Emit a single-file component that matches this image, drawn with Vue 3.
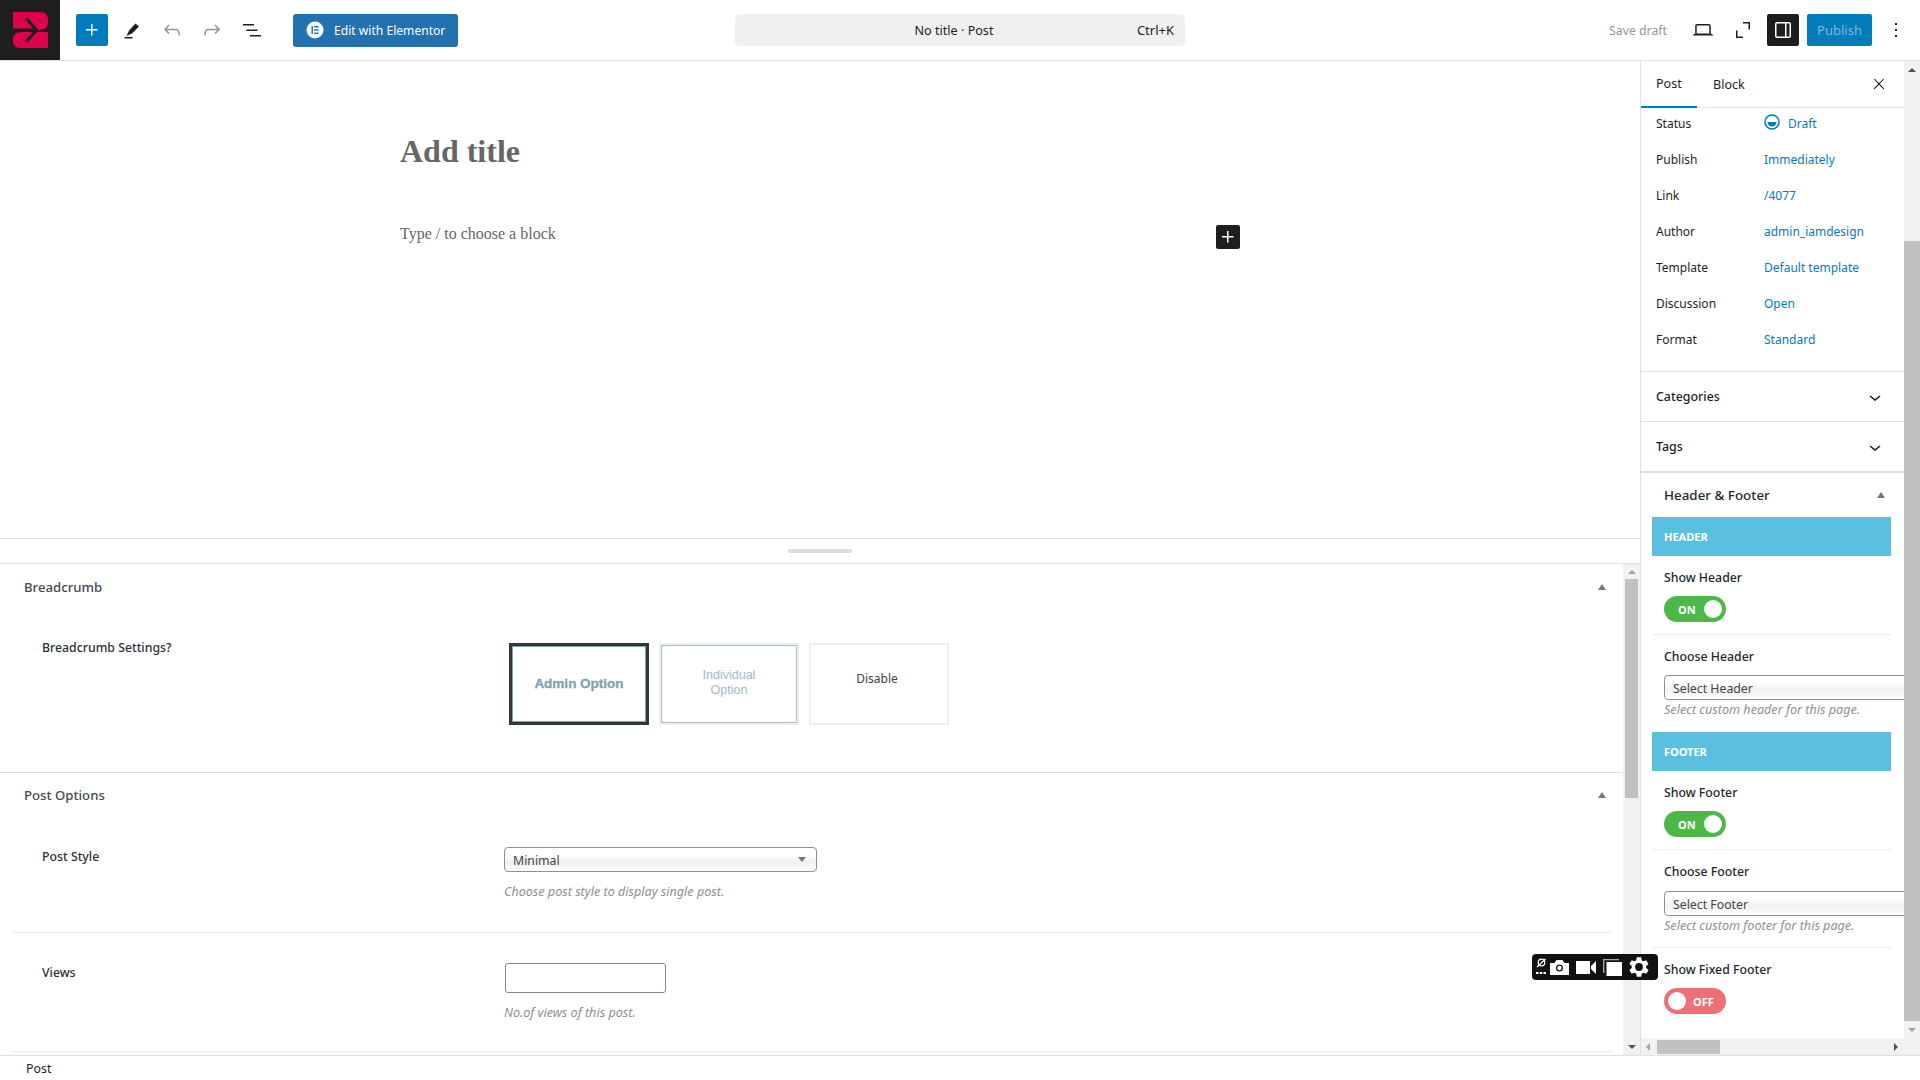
<script setup>
const metaRows = [
  ['Status', 'Draft'],
  ['Publish', 'Immediately'],
  ['Link', '/4077'],
  ['Author', 'admin_iamdesign'],
  ['Template', 'Default template'],
  ['Discussion', 'Open'],
  ['Format', 'Standard']
]
const options = [
  { label: 'Admin Option', cls: 'opt-admin' },
  { label: 'Individual Option', cls: 'opt-ind' },
  { label: 'Disable', cls: 'opt-dis' }
]
</script>

<template>
  <div class="app">
    <header class="topbar">
      <div class="logo">
        <svg width="60" height="60" viewBox="0 0 60 60">
          <path fill="#e0004d" d="M13 12H40Q48 12 48 20V22Q48 30 40 30H13Z"/>
          <path fill="#e0004d" d="M22 32H48V48H20Q13 48 13 41V39Q13 32 22 32Z"/>
          <path fill="#1e1e1e" d="M13 28.500H36V31.500H13Z"/>
          <path fill="none" stroke="#1e1e1e" stroke-width="3" d="M26 18L36.500 30L26 42"/>
        </svg>
      </div>
      <div class="tools">
        <button class="btn-plus"><svg width="24" height="24" viewBox="0 0 24 24"><path fill="#fff" d="M11 12.500V17.500H12.500V12.500H17.500V11H12.500V6H11V11H6V12.500H11Z"/></svg></button>
        <span class="ico"><svg width="24" height="24" viewBox="0 0 24 24"><path fill="#1e1e1e" d="M4.500 20.500h8V19h-8zM9 12.500l6.500-7 3.500 3-7 7-3.500 1.500-2 1.500 1-2.500z"/></svg></span>
        <span class="ico"><svg width="24" height="24" viewBox="0 0 24 24"><path fill="#949494" d="M18.300 11.700c-.6-.6-1.400-.9-2.300-.9H6.700l2.900-3.300-1.100-1-4.500 5L8.500 16l1-1-2.700-2.700H16c.5 0 .9.2 1.300.5 1 1 1 3.400 1 4.500v.3h1.500v-.2c0-1.500 0-4.300-1.500-5.700z"/></svg></span>
        <span class="ico"><svg width="24" height="24" viewBox="0 0 24 24"><path fill="#949494" d="M15.600 6.500l-1.100 1 2.900 3.300H8c-.9 0-1.700.3-2.300.9-1.400 1.500-1.400 4.200-1.400 5.600v.2h1.500v-.3c0-1.100 0-3.500 1-4.500.3-.3.700-.5 1.300-.5h9.200L14.500 15l1.100 1.100 4.600-4.600-4.600-5z"/></svg></span>
        <span class="ico"><svg width="24" height="24" viewBox="0 0 24 24"><path fill="#1e1e1e" d="M3 6h11v1.500H3V6zm3.500 5.500h11V13h-11v-1.500zM21 17H10v1.500h11V17z"/></svg></span>
      </div>
      <button class="btn-elementor">
        <span class="e-badge"><svg width="18" height="18" viewBox="0 0 18 18"><circle cx="9" cy="9" r="8.500" fill="#fff"/><path fill="#2271b1" d="M5.500 5h1.400v8H5.500zM8.200 5h4.300v1.500H8.200zM8.200 8.200h4.300v1.500H8.200zM8.200 11.500h4.300V13H8.200z"/></svg></span>
        Edit with Elementor
      </button>
      <div class="command">
        <span class="cmd-title">No title · Post</span>
        <span class="cmd-key">Ctrl+K</span>
      </div>
      <div class="top-right">
        <span class="save">Save draft</span>
        <span class="ico"><svg width="24" height="24" viewBox="0 0 24 24"><path fill="#1e1e1e" d="M20.500 16h-.7V8c0-1.100-.9-2-2-2H6.200c-1.100 0-2 .9-2 2v8h-.7c-.8 0-1.500.7-1.500 1.500h20c0-.8-.7-1.500-1.500-1.500zM5.700 8c0-.3.2-.5.5-.5h11.600c.3 0 .5.200.5.5v7.600H5.700V8z"/></svg></span>
        <span class="ico"><svg width="24" height="24" viewBox="0 0 24 24"><path fill="#1e1e1e" d="M5 12.500h1.500v6H12V20H5zM19 11.500h-1.500v-6H12V4h7z"/></svg></span>
        <span class="ico ico-dark"><svg width="24" height="24" viewBox="0 0 24 24"><path fill="#fff" d="M18 4H6c-1.100 0-2 .9-2 2v12c0 1.100.9 2 2 2h12c1.100 0 2-.9 2-2V6c0-1.100-.9-2-2-2zm-4 14.500H6c-.3 0-.5-.2-.5-.5V6c0-.3.2-.5.5-.5h8v13zm4.500-.5c0 .3-.2.5-.5.5h-2.500v-13H18c.3 0 .5.200.5.5v12z"/></svg></span>
        <button class="btn-publish">Publish</button>
        <span class="ico ico-more"><svg width="24" height="24" viewBox="0 0 24 24"><path fill="#1e1e1e" d="M13 19h-2v-2h2v2zm0-6h-2v-2h2v2zm0-6h-2V5h2v2z"/></svg></span>
      </div>
    </header>

    <div class="body">
      <main class="main">
        <section class="editor">
          <div class="canvas">
            <h1 class="title">Add title</h1>
            <div class="para-row">
              <p class="para">Type / to choose a block</p>
              <button class="mini-plus"><svg width="24" height="24" viewBox="0 0 24 24"><path fill="#fff" d="M11 12.500V17.500H12.500V12.500H17.500V11H12.500V6H11V11H6V12.500H11Z"/></svg></button>
            </div>
          </div>
        </section>
        <div class="resize"><span class="grip"></span></div>
        <section class="metabox">
          <div class="meta-scroll">
            <div class="mb-head"><span>Breadcrumb</span><i class="tri"></i></div>
            <div class="mb-row crumb-row">
              <label class="mb-label">Breadcrumb Settings?</label>
              <div class="opts">
                <div v-for="o in options" :key="o.label" class="opt" :class="o.cls"><span>{{ o.label }}</span></div>
              </div>
            </div>
            <div class="mb-head second"><span>Post Options</span><i class="tri"></i></div>
            <div class="mb-row style-row">
              <label class="mb-label">Post Style</label>
              <div class="field">
                <div class="fake-select wide">Minimal<i class="sel-tri"></i></div>
                <p class="hint">Choose post style to display single post.</p>
              </div>
            </div>
            <div class="mb-row views-row">
              <label class="mb-label">Views</label>
              <div class="field">
                <div class="fake-input"></div>
                <p class="hint">No.of views of this post.</p>
              </div>
            </div>
          </div>
          <div class="scrollbar">
            <i class="arr up"></i>
            <div class="thumb-track"><div class="thumb"></div></div>
            <i class="arr down"></i>
          </div>
        </section>
      </main>

      <aside class="sidebar">
        <div class="side-col">
          <div class="tabs">
            <span class="tab active">Post</span>
            <span class="tab">Block</span>
            <svg class="close" width="24" height="24" viewBox="0 0 24 24"><path fill="#1e1e1e" d="M13 11.800l6.100-6.300-1-1-6.100 6.200-6.100-6.200-1 1 6.100 6.300-6.500 6.700 1 1 6.500-6.600 6.500 6.600 1-1z" transform="translate(3.600 3.600) scale(.7)"/></svg>
          </div>
          <div class="side-scroll">
            <div class="meta-list">
              <div v-for="(r, i) in metaRows" :key="r[0]" class="meta-row">
                <span class="m-key">{{ r[0] }}</span>
                <span class="m-val">
                  <svg v-if="i === 0" class="draft-ico" width="16" height="16" viewBox="0 0 16 16"><circle cx="8" cy="8" r="7" fill="none" stroke="#007cba" stroke-width="1.500"/><path fill="#007cba" d="M3.500 8h9a4.500 4.500 0 0 1-9 0z"/></svg>{{ r[1] }}
                </span>
              </div>
            </div>
            <div class="panel">Categories<svg width="24" height="24" viewBox="0 0 24 24"><path fill="#1e1e1e" d="M17.500 11.600L12 16l-5.500-4.400.9-1.200L12 14l4.500-3.600 1 1.200z"/></svg></div>
            <div class="panel thick">Tags<svg width="24" height="24" viewBox="0 0 24 24"><path fill="#1e1e1e" d="M17.500 11.600L12 16l-5.500-4.400.9-1.200L12 14l4.500-3.600 1 1.200z"/></svg></div>
            <div class="hf">
              <div class="hf-head"><span>Header &amp; Footer</span><i class="tri"></i></div>
              <div class="band">HEADER</div>
              <div class="hf-field first">
                <div class="hf-label">Show Header</div>
                <div class="toggle on"><b>ON</b><i></i></div>
              </div>
              <div class="hf-field sel">
                <div class="hf-label">Choose Header</div>
                <div class="fake-select side">Select Header</div>
                <p class="hint side-hint">Select custom header for this page.</p>
              </div>
              <div class="band">FOOTER</div>
              <div class="hf-field first">
                <div class="hf-label">Show Footer</div>
                <div class="toggle on"><b>ON</b><i></i></div>
              </div>
              <div class="hf-field sel sep">
                <div class="hf-label">Choose Footer</div>
                <div class="fake-select side">Select Footer</div>
                <p class="hint side-hint">Select custom footer for this page.</p>
              </div>
              <div class="hf-field last">
                <div class="hf-label">Show Fixed Footer</div>
                <div class="toggle off"><i></i><b>OFF</b></div>
              </div>
            </div>
          </div>
          <div class="hbar">
            <i class="arr left"></i>
            <div class="hthumb"></div>
            <i class="arr right"></i>
          </div>
        </div>
        <div class="vbar">
          <i class="arr up dark"></i>
          <div class="vtrack"><div class="vthumb"></div></div>
          <i class="arr down light"></i>
          <div class="corner"></div>
        </div>
      </aside>

      <div class="float-bar">
        <svg width="10" height="20" viewBox="0 0 10 20"><circle cx="5.500" cy="5.500" r="3.300" fill="none" stroke="#fff" stroke-width="1.200"/><path stroke="#fff" stroke-width="1.200" d="M1 10 L9.500 2"/><path fill="#fff" d="M0 15h2.500v2H0zM3.700 15h2.500v2H3.700zM7.400 15h2.500v2H7.400z"/></svg>
        <svg class="cam" width="19" height="15" viewBox="0 0 19 15"><path fill="#fff" fill-rule="evenodd" d="M0 3h4.500l2-3h6l2 3H19v12H0zM9.500 4.500a3.500 3.500 0 1 0 0 7 3.500 3.500 0 0 0 0-7zm0 1.300a2.200 2.200 0 1 1 0 4.400 2.200 2.200 0 0 1 0-4.400z"/></svg>
        <svg width="20" height="13" viewBox="0 0 20 13"><path fill="#fff" d="M0 0h14v13H0zM15 5L20 0v13L15 8z"/></svg>
        <svg width="19" height="17" viewBox="0 0 19 17"><path fill="none" stroke="#aaa" stroke-width="1.300" d="M.7 14V.7H16"/><path fill="#fff" d="M3.500 3H19V17H3.500z"/></svg>
        <svg width="20" height="20" viewBox="3 3 18 18"><path fill="#fff" d="M19.400 13a7.500 7.500 0 0 0 0-2l2.100-1.600-2-3.500-2.500 1a7.500 7.500 0 0 0-1.700-1L15 3.200h-4l-.4 2.700a7.500 7.500 0 0 0-1.700 1l-2.500-1-2 3.500L6.500 11a7.500 7.500 0 0 0 0 2l-2.100 1.600 2 3.500 2.500-1a7.500 7.500 0 0 0 1.700 1l.4 2.700h4l.4-2.700a7.500 7.500 0 0 0 1.700-1l2.500 1 2-3.500zM13 15.500a3.500 3.500 0 1 1 0-7 3.500 3.500 0 0 1 0 7z" transform="translate(-1 0)"/></svg>
      </div>
    </div>

    <footer class="foot">Post</footer>
  </div>
</template>

<style>
html, body { margin: 0; background: #fff; }
</style>

<style scoped>
.app {
  width: 1920px; height: 1080px; display: flex; flex-direction: column; overflow: hidden;
  font-family: "Noto Sans", "Open Sans", sans-serif; font-size: 12.4px; color: #1e1e1e; background: #fff;
}
button { border: 0; padding: 0; font: inherit; }
i { display: block; }
svg { display: block; flex: none; }

.topbar { height: 60px; flex: none; display: flex; align-items: center; border-bottom: 1px solid #e0e0e0; }
.logo { width: 60px; height: 60px; background: #1e1e1e; flex: none; }
.tools { display: flex; align-items: center; margin-left: 16px; }
.btn-plus { width: 32px; height: 32px; background: #007cba; border-radius: 2px; display: flex; align-items: center; justify-content: center; margin-right: 8px; }
.ico { width: 32px; height: 32px; display: flex; align-items: center; justify-content: center; margin-right: 8px; flex: none; }
.tools .ico:last-child { margin-right: 0; }
.btn-elementor { margin-left: 25px; width: 165px; height: 33px; background: #2271b1; color: #fff; border-radius: 3px; display: flex; align-items: center; padding-left: 13px; gap: 10px; font-size: 12.1px; box-sizing: border-box; white-space: nowrap; }
.command { margin-left: 277px; width: 450px; height: 32px; background: #f0f0f0; border-radius: 4px; position: relative; display: flex; align-items: center; justify-content: center; }
.cmd-title { font-size: 12.6px; margin-right: 12px; }
.cmd-key { position: absolute; right: 11px; font-size: 13px; }
.top-right { margin-left: auto; display: flex; align-items: center; }
.save { color: #949494; font-size: 12.3px; margin-right: 20px; }
.top-right .ico { margin-right: 8px; }
.ico-dark { background: #1e1e1e; border-radius: 2px; }
.btn-publish { width: 65px; height: 32px; background: #007cba; color: #7fb8d8; border-radius: 2px; font-size: 13px; }
.ico-more { margin: 0 8px 0 8px !important; }

.body { flex: 1; min-height: 0; display: flex; position: relative; }
.main { flex: 1; min-width: 0; display: flex; flex-direction: column; }
.editor { height: 477px; flex: none; border-bottom: 1px solid #e0e0e0; }
.canvas { width: 840px; margin-left: 400px; padding-top: 68px; }
.title { margin: 0; font: bold 32px/44px "Liberation Serif", serif; color: #666; }
.para-row { display: flex; align-items: center; justify-content: space-between; margin-top: 46px; width: 840px; }
.para { margin: 0; font: 16px/24px "Liberation Serif", serif; color: #666; }
.mini-plus { width: 24px; height: 24px; background: #1e1e1e; border-radius: 2px; margin-top: 6px; }
.resize { height: 24px; flex: none; border-bottom: 1px solid #e0e0e0; display: flex; align-items: center; justify-content: center; }
.grip { width: 64px; height: 4px; background: #ddd; border-radius: 2px; }
.metabox { flex: 1; min-height: 0; display: flex; }
.meta-scroll { flex: 1; min-width: 0; overflow: hidden; }
.mb-head { height: 45px; display: flex; align-items: center; justify-content: space-between; padding: 0 17px 0 24px; font-size: 13.2px; font-weight: 500; color: #444b52; box-sizing: border-box; }
.mb-head.second { height: 44px; border-top: 1px solid #ddd; }
.tri { width: 0; height: 0; border: 4px solid transparent; border-top: 0; border-bottom: 6px solid #777; }
.mb-row { display: flex; align-items: flex-start; margin: 0 12px; }
.mb-label { width: 492px; padding-left: 30px; box-sizing: border-box; font-size: 12.3px; font-weight: 500; line-height: 19px; flex: none; color: #2b3036; }
.crumb-row { height: 163px; padding-top: 29px; box-sizing: border-box; }
.opts { display: flex; gap: 10px; margin-left: 5px; margin-top: 5px; }
.opt { width: 140px; height: 82px; box-sizing: border-box; display: flex; align-items: center; justify-content: center; text-align: center; }
.opt-admin { border: 3px solid #32373c; box-shadow: inset 0 0 0 1px #7ea2b0; color: #7ea2b0; font: bold 13.5px "Liberation Sans", sans-serif; -webkit-text-stroke: .3px #7ea2b0; padding-bottom: 2px; }
.opt-ind { border: 2px solid #f0f0f0; box-shadow: inset 0 0 0 1px #a8c0cc; color: #a2bac6; font: 12.5px/15px "Liberation Sans", sans-serif; padding: 0 40px 2px; }
.opt-dis { border: 2px solid #f0f0f0; color: #3c434a; font-size: 12px; padding: 0 4px 12px 0; }
.style-row { height: 117px; padding-top: 31px; box-sizing: border-box; border-bottom: 1px solid #eaeaea; }
.field { display: flex; flex-direction: column; }
.fake-select { background: linear-gradient(#fff 30%, #f0f0f0 60%, #fff); border: 1px solid #8c8f94; border-radius: 4px; height: 25px; box-sizing: border-box; font-size: 12.3px; line-height: 25px; padding-left: 8px; color: #444; position: relative; }
.wide { width: 313px; }
.sel-tri { position: absolute; right: 10px; top: 9px; width: 0; height: 0; border: 4px solid transparent; border-bottom: 0; border-top: 5px solid #777; }
.hint { margin: 0; font-size: 12.6px; font-style: italic; color: #8c8f94; line-height: 18px; }
.style-row .hint { margin-top: 11px; }
.views-row { height: 119px; padding-top: 30px; box-sizing: border-box; border-bottom: 1px solid #eaeaea; }
.fake-input { width: 161px; height: 30px; border: 1px solid #7e8993; border-radius: 3px; box-sizing: border-box; margin-left: 1px; }
.views-row .hint { margin-top: 11px; }
.scrollbar { width: 17px; flex: none; background: #f1f1f1; display: flex; flex-direction: column; align-items: center; }
.thumb-track { flex: 1; width: 100%; }
.thumb { height: 219px; background: #c1c1c1; margin: 0 2px; }
.arr { flex: none; width: 0; height: 0; border: 4px solid transparent; }
.arr.up { border-top: 0; border-bottom: 4px solid #a3a3a3; margin: 6px 0 5px; }
.arr.down { border-bottom: 0; border-top: 4px solid #505050; margin: 6px 0; }
.arr.up.dark { border-bottom-color: #505050; margin: 7px 0; }
.arr.down.light { border-top-color: #a3a3a3; margin: 6px 0; }
.arr.left { border-left: 0; border-right: 4px solid #a3a3a3; margin: 0 7px 0 5px; }
.arr.right { border-right: 0; border-left: 4px solid #505050; margin: 0 6px 0 auto; }

.sidebar { width: 280px; flex: none; display: flex; border-left: 1px solid #e0e0e0; box-sizing: border-box; }
.side-col { width: 263px; flex: none; display: flex; flex-direction: column; overflow: hidden; }
.tabs { height: 47px; flex: none; display: flex; align-items: center; border-bottom: 1px solid #e0e0e0; box-sizing: border-box; }
.tab { height: 47px; box-sizing: border-box; padding: 0 15px; line-height: 46px; width: 56px; font-size: 12.6px; }
.tab + .tab { width: auto; padding-left: 16px; line-height: 48px; }
.tab.active { border-bottom: 2px solid #007cba; }
.close { margin-left: auto; margin-right: 13px; }
.side-scroll { flex: 1; min-height: 0; overflow: hidden; }
.meta-list { display: flow-root; padding: 0 15px; height: 264px; border-bottom: 1px solid #e0e0e0; box-sizing: border-box; }
.meta-row { height: 36px; display: flex; align-items: center; font-size: 12px; }
.meta-row:first-child { margin-top: -3px; }
.m-key { width: 108px; flex: none; }
.m-val { color: #007cba; display: flex; align-items: center; gap: 8px; }
.draft-ico { margin-top: -2px; }
.panel { height: 50px; display: flex; align-items: center; justify-content: space-between; padding: 0 17px 0 15px; border-bottom: 1px solid #e0e0e0; font-weight: 500; font-size: 12.4px; box-sizing: border-box; }
.panel.thick { height: 51px; border-bottom: 2px solid #e0e0e0; }
.hf { padding: 0 11px; }
.hf-head { height: 44px; display: flex; align-items: center; justify-content: space-between; padding: 0 8px 0 12px; font-size: 13.4px; font-weight: 500; color: #23282d; }
.band { height: 39px; width: 239px; background: #5bbfe0; color: #fff; font-size: 11px; font-weight: 700; line-height: 39px; padding-left: 12px; box-sizing: border-box; }
.hf-field { padding-left: 12px; width: 240px; box-sizing: border-box; }
.hf-label { font-size: 12.3px; font-weight: 500; line-height: 19px; color: #23282d; }
.hf-field.first { padding-top: 12px; height: 79px; border-bottom: 1px solid #eee; }
.hf-field.sel { padding-top: 12px; height: 97px; }
.hf-field.sep { height: 98px; border-bottom: 1px solid #eee; }
.hf-field.sep .fake-select { margin-top: 10px; }
.hf-field.last { padding-top: 12px; height: 80px; }
.toggle { width: 62px; height: 26px; border-radius: 13px; margin-top: 9px; display: flex; align-items: center; color: #fff; font-size: 11px; box-sizing: border-box; }
.toggle i { width: 18px; height: 18px; border-radius: 50%; background: #fff; }
.toggle b { font-weight: 700; }
.toggle.on { background: #4db848; padding-left: 14px; }
.toggle.on i { margin-left: auto; margin-right: 4px; }
.toggle.off { background: #ef6f76; padding-left: 4px; }
.toggle.off b { margin-left: 7px; }
.fake-select.side { width: 260px; margin-top: 9px; }
.side-hint { margin-top: 1px; white-space: nowrap; }
.hbar { height: 17px; flex: none; background: #f1f1f1; display: flex; align-items: center; }
.hthumb { width: 63px; height: 14px; background: #c1c1c1; }
.vbar { width: 16px; flex: none; background: #f1f1f1; display: flex; flex-direction: column; align-items: center; }
.vtrack { flex: 1; width: 100%; }
.vthumb { margin-top: 162px; height: 780px; background: #c1c1c1; }
.corner { height: 17px; flex: none; }

.float-bar { position: absolute; left: 1532px; top: 893px; width: 126px; height: 26px; background: #111; border-radius: 4px; display: flex; align-items: center; gap: 7px; padding-left: 4px; box-sizing: border-box; }
.cam { margin-left: -3px; }

.foot { height: 25px; flex: none; border-top: 1px solid #e0e0e0; box-sizing: border-box; font-size: 12.4px; line-height: 25px; padding-left: 26px; }
</style>
